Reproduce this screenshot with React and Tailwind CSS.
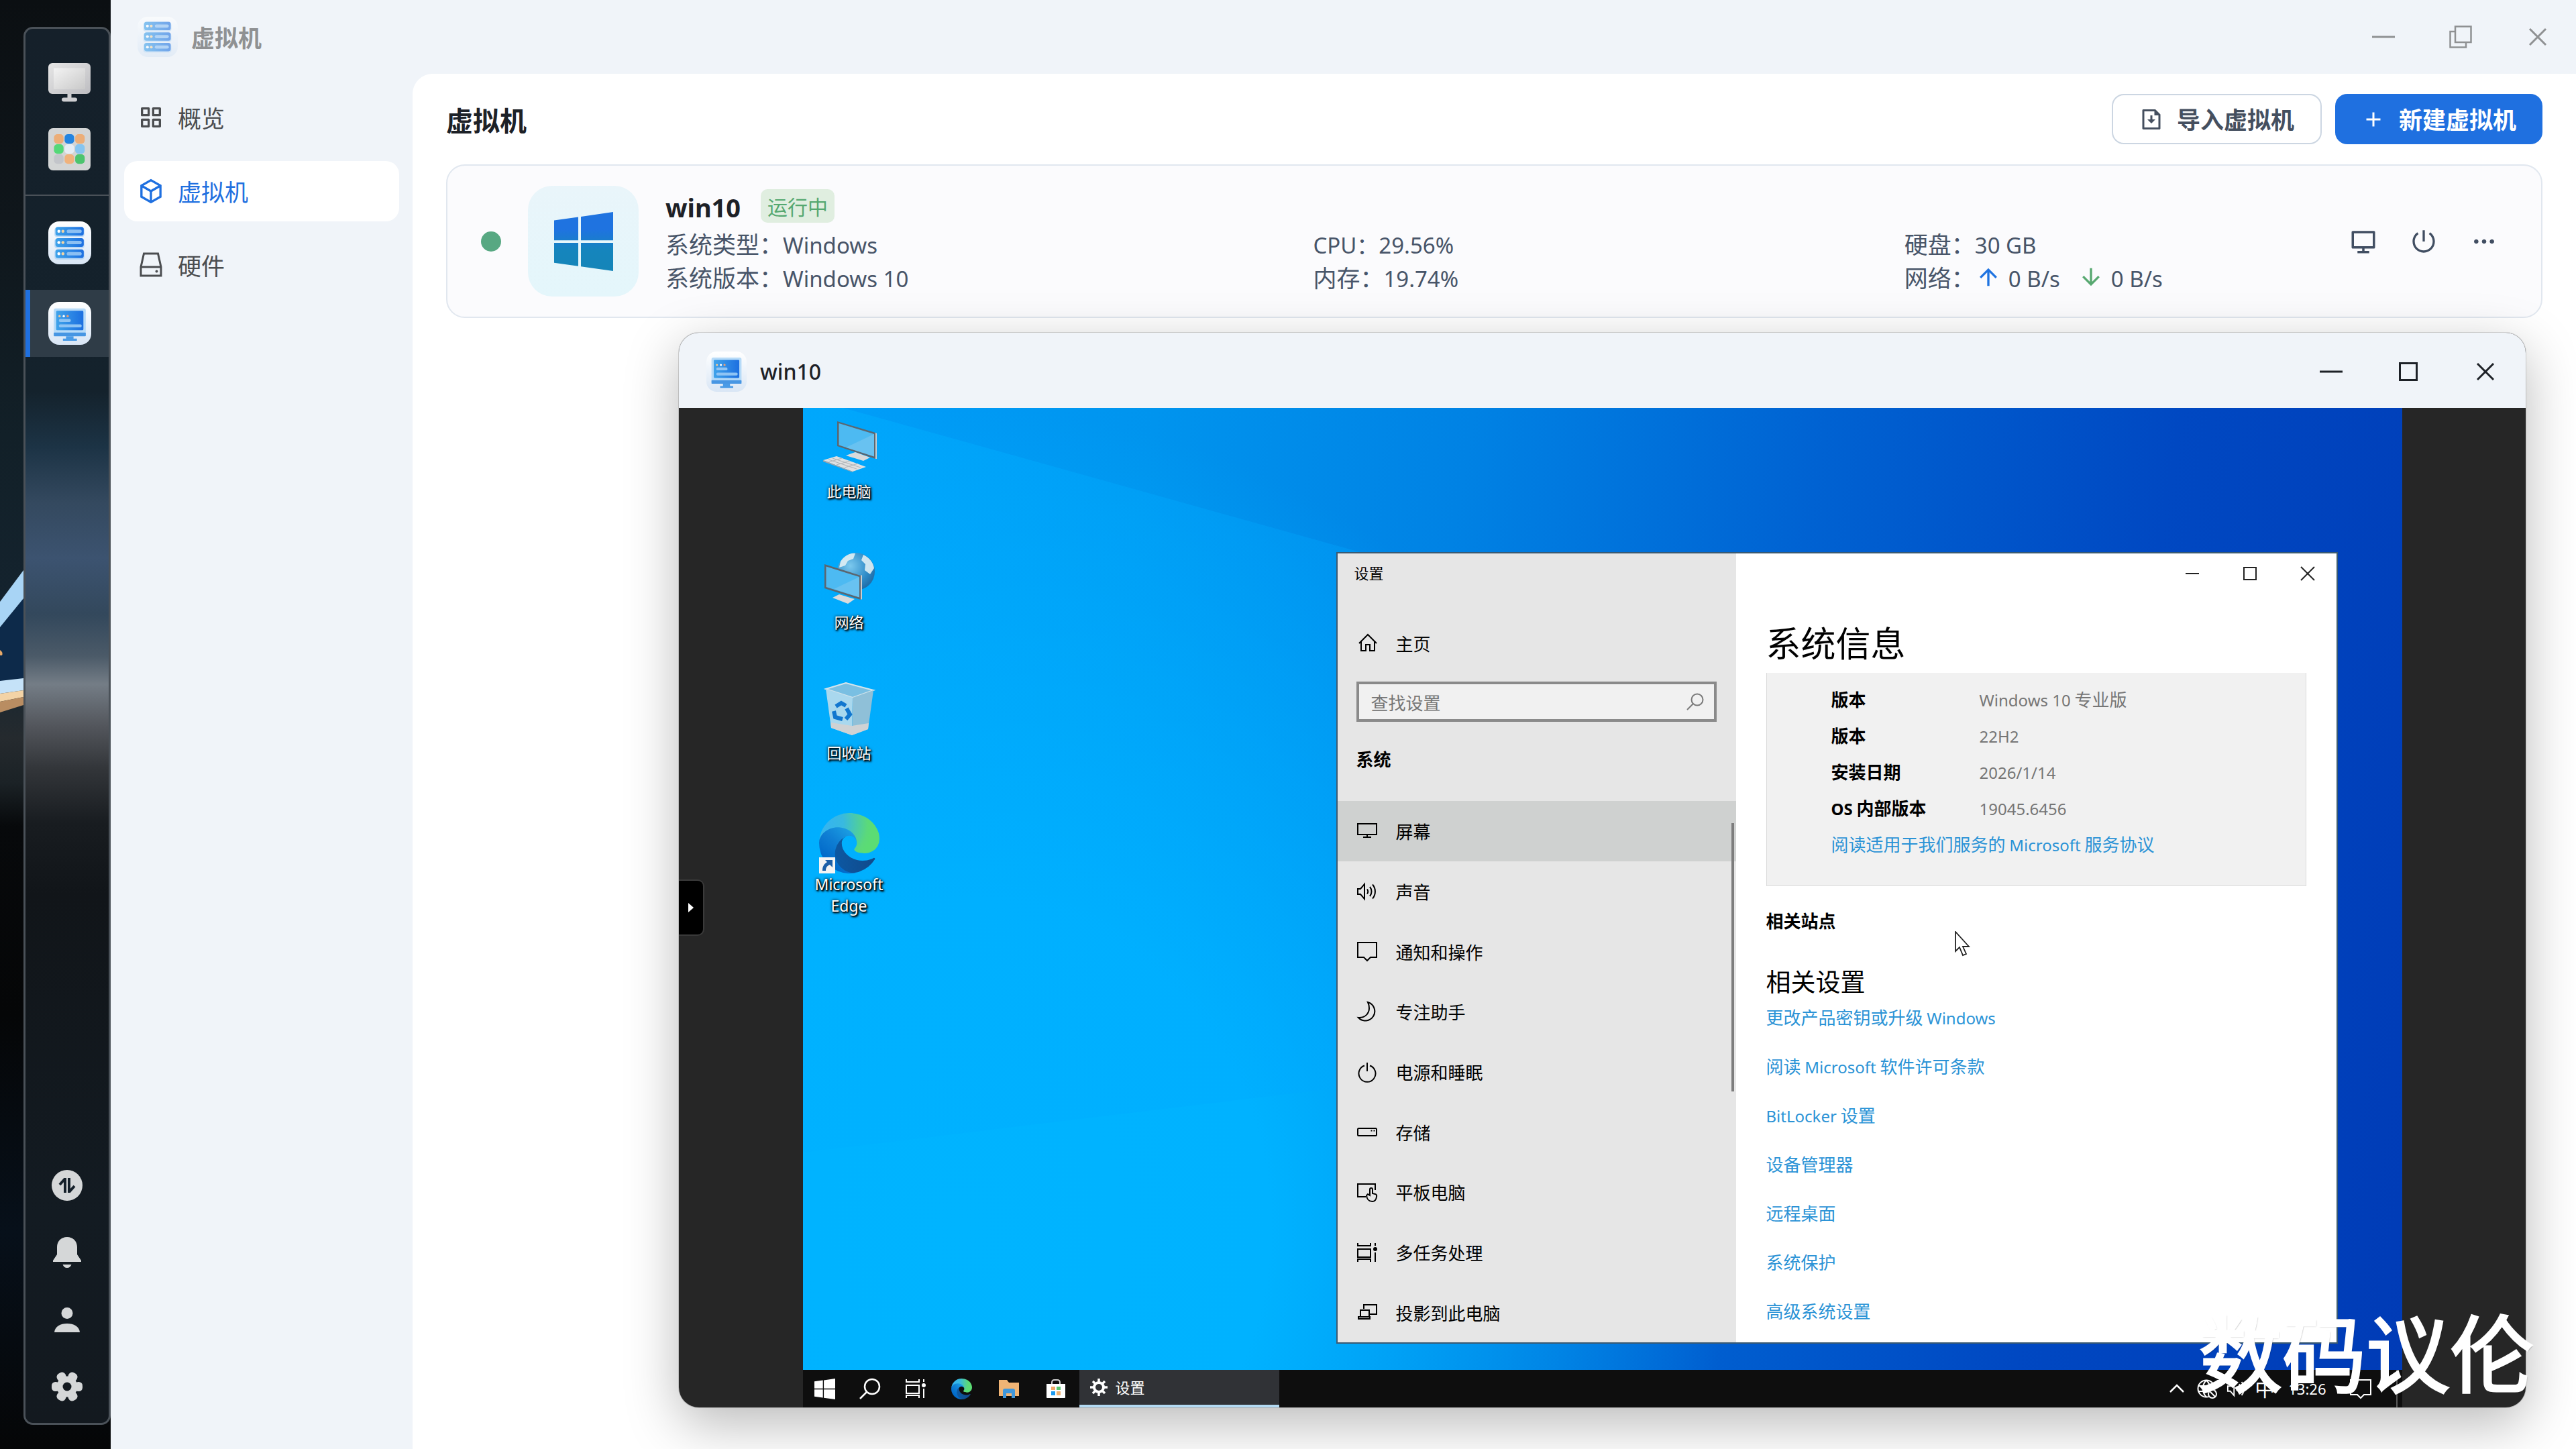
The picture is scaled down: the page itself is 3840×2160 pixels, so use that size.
import React from "react";
import {
  RiFunctionLine,
  RiBox3Line,
  RiFileDownloadLine,
  RiAddLine,
  RiComputerLine,
  RiShutDownLine,
  RiMoreFill,
  RiArrowUpLine,
  RiArrowDownLine,
} from "react-icons/ri";

/* ---------- app icons ---------- */

function ServerTile({ className }) {
  return (
    <svg viewBox="0 0 63 63" className={className} aria-hidden="true">
      <defs>
        <linearGradient id="tileBg" x1="0" y1="0" x2="0" y2="1">
          <stop offset="0" stopColor="#ffffff" />
          <stop offset="1" stopColor="#d9e6f5" />
        </linearGradient>
        <linearGradient id="blueBar" x1="0" y1="0" x2="1" y2="0">
          <stop offset="0" stopColor="#3fa3ea" />
          <stop offset="1" stopColor="#1d6fe0" />
        </linearGradient>
      </defs>
      <rect width="63" height="63" rx="16" fill="url(#tileBg)" />
      {[8, 24.5, 41].map((y) => (
        <g key={y}>
          <rect x="9" y={y + 1} width="44" height="14" rx="4" fill="#a9d0f5" opacity=".7" />
          <rect x="10.5" y={y} width="41.5" height="13" rx="3.5" fill="url(#blueBar)" />
          <circle cx="15.5" cy={y + 6.5} r="2.2" fill="#fff" />
          <circle cx="21.5" cy={y + 6.5} r="2.2" fill="#f2d5a5" />
          <rect x="27" y={y + 4} width="22" height="5" rx="2.5" fill="#8cc0f3" />
        </g>
      ))}
    </svg>
  );
}

function ScreenTile({ className }) {
  return (
    <svg viewBox="0 0 63 63" className={className} aria-hidden="true">
      <rect width="63" height="63" rx="16" fill="url(#tileBg)" />
      <rect x="8" y="9.5" width="47" height="40" rx="3" fill="#b7dbf8" />
      <rect x="11.5" y="13" width="40" height="28.5" rx="1.5" fill="url(#blueBar)" />
      <rect x="8" y="45" width="47" height="5.5" rx="1" fill="#4796e3" />
      <path d="M26 50.5h11v3.5h5v3H21.5v-3H26z" fill="#4a9be6" />
      <circle cx="16.5" cy="21" r="1.7" fill="#f0c896" />
      <circle cx="22.7" cy="21" r="1.7" fill="#fff" />
      <circle cx="28.4" cy="21" r="1.7" fill="#f0a070" />
      <rect x="15.5" y="25" width="17.5" height="4.5" rx="2" fill="#8fc4f4" />
      <rect x="15.5" y="33" width="33.5" height="4.5" rx="2" fill="#8fc4f4" />
    </svg>
  );
}

function GreyMonitor({ className }) {
  return (
    <svg viewBox="0 0 63 58" className={className} aria-hidden="true">
      <defs>
        <linearGradient id="greyMon" x1="0" y1="0" x2="1" y2="1">
          <stop offset="0" stopColor="#e6e6e6" />
          <stop offset="1" stopColor="#bdbdc1" />
        </linearGradient>
        <linearGradient id="greyScr" x1="0" y1="0" x2="1" y2="1">
          <stop offset="0" stopColor="#f3f3f3" />
          <stop offset="1" stopColor="#c9c9c9" />
        </linearGradient>
      </defs>
      <rect width="63" height="46" rx="6" fill="url(#greyMon)" />
      <rect x="8" y="7.5" width="47" height="31.5" rx="1" fill="url(#greyScr)" />
      <path d="M28.5 46h6v5.500h5.500a3 3 0 0 1 0 6h-17a3 3 0 0 1 0-6h5.500z" fill="#cfcfd2" />
    </svg>
  );
}

function AppGrid({ className }) {
  const colours = [
    "#ecae78", "#2384e0", "#ecae78",
    "#55d878", "#e6edf5", "#86c5f0",
    "#c3c5ca", "#f0b27c", "#4cc46e",
  ];
  return (
    <svg viewBox="0 0 63 63" className={className} aria-hidden="true">
      <rect width="63" height="63" rx="7" fill="#d3d5d5" />
      {colours.map((c, i) => (
        <rect
          key={i}
          x={8.5 + (i % 3) * 15.8}
          y={9 + Math.floor(i / 3) * 15}
          width="14.200"
          height="14.200"
          rx="5"
          fill={c}
        />
      ))}
    </svg>
  );
}

function WindowsLogo({ className, fill }) {
  return (
    <svg viewBox="0 0 88 88" className={className} aria-hidden="true">
      <defs>
        <linearGradient id="winBlue" x1="0" y1="0" x2="0" y2="88" gradientUnits="userSpaceOnUse">
          <stop offset="0.300" stopColor="#1f73e0" />
          <stop offset="0.650" stopColor="#1585bd" />
          <stop offset="1" stopColor="#1585b8" />
        </linearGradient>
      </defs>
      <path
        fill={fill}
        d="M0 12.400 36 7.400v34.800H0zM40 6.900 88 0v42.200H40zM0 46h36v34.700l-36-5zM40 46h48v42l-48-6.700z"
      />
    </svg>
  );
}

function EdgeLogo({ className }) {
  return (
    <svg viewBox="0 0 256 256" className={className} aria-hidden="true">
      <defs>
        <linearGradient id="edgeA" x1="63" y1="177" x2="241" y2="177" gradientUnits="userSpaceOnUse">
          <stop offset="0" stopColor="#0c59a4" />
          <stop offset="1" stopColor="#114a8b" />
        </linearGradient>
        <linearGradient id="edgeB" x1="157" y1="100" x2="46" y2="222" gradientUnits="userSpaceOnUse">
          <stop offset="0" stopColor="#1b9de2" />
          <stop offset="0.450" stopColor="#0f7fd4" />
          <stop offset="1" stopColor="#0067c8" />
        </linearGradient>
        <radialGradient id="edgeC" cx="26" cy="49" r="205" gradientUnits="userSpaceOnUse">
          <stop offset="0" stopColor="#35b4f1" />
          <stop offset="0.400" stopColor="#38b9e0" />
          <stop offset="0.900" stopColor="#5bd97a" />
          <stop offset="1" stopColor="#5bdc74" />
        </radialGradient>
      </defs>
      <g transform="translate(-4.630 -4.920)">
        <path fill="url(#edgeA)" d="M235.680 195.460a93.730 93.730 0 0 1-10.540 4.710 101.870 101.870 0 0 1-35.900 6.460c-47.320 0-88.540-32.550-88.540-74.320A31.480 31.480 0 0 1 117.130 105c-42.800 1.800-53.800 46.400-53.800 72.530 0 73.880 68.090 81.370 82.760 81.370 7.910 0 19.840-2.300 27-4.560l1.310-.44a128.340 128.340 0 0 0 66.600-52.800 4 4 0 0 0-5.320-5.640z" />
        <path fill="url(#edgeB)" d="M110.340 246.340A79.200 79.200 0 0 1 87.600 225a80.720 80.720 0 0 1 29.530-120c3.120-1.470 8.450-4.130 15.540-4a32.350 32.350 0 0 1 25.690 13 31.880 31.880 0 0 1 6.360 18.660c0-.21 24.460-79.600-80-79.600-43.900 0-80 41.660-80 78.210a130.150 130.150 0 0 0 12.110 56 128 128 0 0 0 156.380 67.110 75.550 75.550 0 0 1-62.780-8z" />
        <path fill="url(#edgeC)" d="M156.940 153.780c-.81 1.050-3.300 2.500-3.300 5.660 0 2.610 1.700 5.120 4.720 7.230 14.380 10 41.490 8.680 41.560 8.680a59.560 59.560 0 0 0 30.270-8.350 61.380 61.380 0 0 0 30.430-52.880c.26-22.410-8-37.310-11.340-43.910C228.090 28.760 182.350 5 132.610 5a128 128 0 0 0-128 126.200c.48-36.540 36.800-66.050 80-66.050 3.500 0 23.460.34 42 10.070 16.340 8.580 24.900 18.940 30.850 29.210 6.180 10.670 7.280 24.150 7.280 29.520s-2.740 13.330-7.800 19.830z" />
      </g>
    </svg>
  );
}

/* ---------- line icons ---------- */

function Line({ className, box = 30, width = 2, children }) {
  return (
    <svg
      viewBox={`0 0 ${box} ${box}`}
      className={className}
      fill="none"
      stroke="currentColor"
      strokeWidth={width}
      aria-hidden="true"
    >
      {children}
    </svg>
  );
}

const IconDrive = () => (
  <Line className="size-10" box={40} width={3}>
    <path d="M9.500 4h21l4.500 20v13H5V24zM5 24h30" transform="translate(0 -1)" />
    <circle cx="28.500" cy="29.500" r="2" fill="currentColor" stroke="none" />
  </Line>
);

const IconMin = ({ className }) => (
  <Line className={className} box={40} width={3}><path d="M3 20h34" /></Line>
);
const IconMax = ({ className }) => (
  <Line className={className} box={40} width={3}><path d="M7.500 7.500h25v25h-25z" /></Line>
);
const IconRestore = ({ className }) => (
  <Line className={className} box={40} width={2.500}>
    <path d="M12 4.500h23.500V28H12zM12 12H4.500v23.500H28V28" />
  </Line>
);
const IconClose = ({ className }) => (
  <Line className={className} box={40} width={3}><path d="m8 8 24 24M32 8 8 32" /></Line>
);

const setIcon = "size-8 shrink-0";
const S = {
  home: (
    <Line className={setIcon} box={32}>
      <path d="M3 17 16 4l13 13M6 14.500V28h7v-9h6v9h7V14.500" />
    </Line>
  ),
  display: (
    <Line className={setIcon} box={32}><path d="M2 5h28v16H2zM16 21v4M10 25h12" /></Line>
  ),
  sound: (
    <Line className={setIcon} box={32}>
      <path d="M2 12h4l6-7v22l-6-7H2zM16 12.500a6 6 0 0 1 0 7M20 9a11 11 0 0 1 0 14M24 5.500a16 16 0 0 1 0 21" />
    </Line>
  ),
  notify: (
    <Line className={setIcon} box={32}><path d="M2 3h28v22h-9l-5 5-5-5H2z" /></Line>
  ),
  moon: (
    <Line className={setIcon} box={32}>
      <path d="M17 2a14 14 0 1 1-14 23c9 1 16-6 16-14 0-3-.5-6-2-9z" />
    </Line>
  ),
  power: (
    <Line className={setIcon} box={32}>
      <path d="M12 6.500a12.500 12.500 0 1 0 8 0M16 2v13" />
    </Line>
  ),
  storage: (
    <Line className={setIcon} box={32}>
      <rect x="2" y="11" width="28" height="11" rx="1.500" />
      <path d="M21.500 14.500h2M25.500 14.500h2" />
    </Line>
  ),
  tablet: (
    <Line className={setIcon} box={32}>
      <path d="M14 23H2V4h26v9" />
      <path d="M20 20v-8a2 2 0 0 1 4 0v6l4 1c2 .5 2.500 2 2 4-.5 4-2.500 7-6.500 7-5 0-8-4-8.500-9l2-2 3 2z" />
    </Line>
  ),
  multi: (
    <Line className={setIcon} box={32}>
      <path d="M2 2v4h19V2M2 11h19v12H2zM2 30v-4h19v4M28 2v4M28 16v14" />
      <circle cx="28" cy="11" r="2" fill="currentColor" />
    </Line>
  ),
  project: (
    <Line className={setIcon} box={32}>
      <path d="M11 11V5h19v14H20M6 22v-9h13v9M3 26v-3h17v3z" />
    </Line>
  ),
  search: (
    <Line className="size-7 shrink-0" box={28}><circle cx="17" cy="11" r="8.500" /><path d="M11 17 2 26" /></Line>
  ),
};

/* Latin runs sit one step smaller than the Chinese text beside them. */
const L = ({ children }) => (
  <span className="font-['Noto_Sans','Noto_Sans_CJK_SC',sans-serif] text-[33px] leading-none">{children}</span>
);
const G = ({ children }) => (
  <span className="font-['Noto_Sans','Noto_Sans_CJK_SC',sans-serif] text-[24px] leading-none">{children}</span>
);

/* ---------- dock ---------- */

function Dock() {
  const small = "flex h-[100px] w-full items-center justify-center text-[#d5d7d8]";
  return (
    <aside className="relative flex w-[165px] shrink-0 flex-col overflow-hidden bg-[linear-gradient(180deg,#0b0f12_0%,#0f161b_15%,#122028_30%,#14232e_42%,#1c2830_48%,#252a2e_51%,#1b2226_54%,#07090b_57%,#050607_70%,#07101a_85%,#050607_100%)] pt-10 pb-9 pl-[35px]">
      <svg viewBox="0 0 35 240" className="absolute top-[840px] left-0 h-[240px] w-[35px]" aria-hidden="true">
        <path d="M0 95 35 52v123H0z" fill="#0d2a4a" />
        <path d="M0 57 35 10v42L0 95z" fill="#a8d4f5" />
        <path d="M0 137v-8q5 3 3 8z" fill="#e6a868" />
        <path d="M0 175 35 171v18L0 194z" fill="#c5e2f8" />
        <path d="M0 194 35 189v10L0 206z" fill="#f3d3a6" />
        <path d="M0 206 35 199v12L0 222z" fill="#b98d62" />
      </svg>
      <nav
        aria-label="Dock"
        className="relative flex flex-1 flex-col items-center rounded-[14px] border-[3px] border-[#4a5158] bg-[linear-gradient(180deg,#15202a_0%,#14222c_26%,#1c3345_30%,#34495f_34%,#3c5370_38%,#33485c_42%,#4b5a68_45%,#747d86_47%,#53565c_50%,#33363a_53%,#181c20_57%,#111519_62%,#131b22_85%,#13191f_100%)] pb-1"
      >
        <button aria-label="桌面" className="mt-[50px] ml-[7px] h-[60px]"><GreyMonitor className="h-[58px] w-[63px]" /></button>
        <button aria-label="应用" className="mt-[38px] mb-[36px] ml-[7px]"><AppGrid className="size-[63px]" /></button>
        <div className="h-[2px] w-full bg-[#4a5158]" />
        <button aria-label="虚拟机" className="mt-[38px] mb-[38px] ml-[7px]"><ServerTile className="size-[64px]" /></button>
        <button aria-label="win10" className="flex h-[100px] w-full items-center justify-center border-l-[7px] border-[#1f70e0] bg-[#2f3c47]">
          <ScreenTile className="size-[64px]" />
        </button>
        <div className="flex-1" />
        <button aria-label="传输" className={small}>
          <svg viewBox="0 0 46 46" className="size-[46px]" aria-hidden="true">
            <circle cx="23" cy="23" r="23" fill="currentColor" />
            <path d="M20 12v22M20 13l-8 9M26 34V12M26 33l8-9" stroke="#15202a" strokeWidth="4" fill="none" />
          </svg>
        </button>
        <button aria-label="通知" className={small}>
          <svg viewBox="0 0 44 46" className="h-[46px] w-[44px]" aria-hidden="true" fill="currentColor">
            <path d="M22 0c9 0 15 6.500 15 15v11l6 9v2H1v-2l6-9V15C7 6.500 13 0 22 0zM15.500 41h13c-1 3-3.500 5-6.500 5s-5.500-2-6.500-5z" />
          </svg>
        </button>
        <button aria-label="用户" className={small}>
          <svg viewBox="0 0 38 40" className="h-10 w-[38px]" aria-hidden="true" fill="currentColor">
            <circle cx="19" cy="10.500" r="8.500" />
            <path d="M0 39c1-9 9-13 19-13s18 4 19 13z" />
          </svg>
        </button>
        <button aria-label="设置" className={small}>
          <svg viewBox="0 0 48 48" className="size-12" aria-hidden="true" fill="currentColor">
            <mask id="cogHole">
              <rect width="48" height="48" fill="#fff" />
              <circle cx="24" cy="24" r="6.500" fill="#000" />
            </mask>
            <g mask="url(#cogHole)">
              <circle cx="24" cy="24" r="15.500" />
              {[0, 60, 120, 180, 240, 300].map((a) => (
                <rect key={a} x="35" y="17" width="12" height="14" rx="5.500" transform={`rotate(${a} 24 24)`} />
              ))}
            </g>
          </svg>
        </button>
      </nav>
    </aside>
  );
}

/* ---------- virtual machine manager ---------- */

const navItems = [
  { label: "概览", icon: <RiFunctionLine className="size-10" /> },
  { label: "虚拟机", icon: <RiBox3Line className="size-10" />, active: true },
  { label: "硬件", icon: <IconDrive /> },
];

function WindowControls({ children, className }) {
  return <div className={`flex h-full ${className}`}>{children}</div>;
}
const ctl = "flex h-full w-[115px] items-center justify-center";

function VmCard() {
  return (
    <article className="mt-[30px] flex h-[229px] items-center rounded-[28px] border-2 border-[#e1e7ef] bg-[#fbfbfd] pr-[40px] pl-[50px]">
      <span className="size-[30px] shrink-0 rounded-full bg-[#57a882]" />
      <div className="ml-10 flex size-[165px] shrink-0 items-center justify-center rounded-[36px] bg-[linear-gradient(180deg,#e9f5fa,#e4f6fb)]">
        <WindowsLogo className="size-[88px]" fill="url(#winBlue)" />
      </div>
      <div className="ml-10 grid flex-1 grid-cols-[965fr_881fr_639fr] text-[35px] leading-[50px] text-[#485569]">
        <div className="col-span-3 mb-[6px] flex h-[50px] items-center gap-[30px]">
          <h2 className="pt-1 font-['Noto_Sans',sans-serif] text-[38px] font-bold text-[#1d2127]">win10</h2>
          <span className="rounded-[10px] bg-[#e0eee0] px-[10px] text-[30px] text-[#55a870]">运行中</span>
        </div>
        <div>系统类型：<L>Windows</L></div>
        <div><L>CPU：29.56%</L></div>
        <div>硬盘：<L>30 GB</L></div>
        <div>系统版本：<L>Windows 10</L></div>
        <div>内存：<L>19.74%</L></div>
        <div className="flex items-center">
          网络：
          <RiArrowUpLine className="size-10 text-[#1f73e0]" />
          <span className="ml-[10px]"><L>0 B/s</L></span>
          <RiArrowDownLine className="ml-[26px] size-10 text-[#57a870]" />
          <span className="ml-[10px]"><L>0 B/s</L></span>
        </div>
      </div>
      <div className="flex text-[#414e62]">
        <button aria-label="控制台" className="flex size-[90px] items-center justify-center"><RiComputerLine className="size-[42px]" /></button>
        <button aria-label="电源" className="flex size-[90px] items-center justify-center"><RiShutDownLine className="size-10" /></button>
        <button aria-label="更多" className="flex size-[90px] items-center justify-center"><RiMoreFill className="size-10" /></button>
      </div>
    </article>
  );
}

function Manager() {
  return (
    <section className="flex min-w-0 flex-1 flex-col bg-[#f0f4f9]">
      <header className="flex h-[110px] shrink-0 items-center justify-between pl-[40px]">
        <div className="flex items-center gap-5">
          <ServerTile className="size-[60px] opacity-60" />
          <h1 className="text-[35px] font-bold text-[#8f9193]">虚拟机</h1>
        </div>
        <WindowControls className="text-[#8f9193]">
          <button aria-label="最小化" className={ctl}><IconMin className="size-10" /></button>
          <button aria-label="还原" className={ctl}><IconRestore className="size-10" /></button>
          <button aria-label="关闭" className={ctl}><IconClose className="size-10" /></button>
        </WindowControls>
      </header>
      <div className="flex min-h-0 flex-1">
        <nav aria-label="导航" className="flex w-[450px] shrink-0 flex-col gap-5 px-5 pt-5">
          {navItems.map((n) => (
            <a
              key={n.label}
              href="#"
              className={
                n.active
                  ? "flex h-[90px] items-center gap-5 rounded-[20px] bg-white px-5 text-[35px] text-[#1f70e0]"
                  : "flex h-[90px] items-center gap-5 rounded-[20px] px-5 text-[35px] text-[#4b4d50]"
              }
            >
              {n.icon}
              {n.label}
            </a>
          ))}
        </nav>
        <main className="min-w-0 flex-1 rounded-tl-[30px] bg-white pt-[30px] pr-[50px] pl-[50px]">
          <div className="flex h-[75px] items-center justify-between">
            <h2 className="text-[40px] font-bold text-[#1d2127]">虚拟机</h2>
            <div className="flex gap-5 text-[35px] font-bold">
              <button className="flex h-[75px] items-center gap-[20px] rounded-[18px] border-2 border-[#ccd6e2] px-[39px] text-[#454f5f]">
                <RiFileDownloadLine className="size-9" />
                导入虚拟机
              </button>
              <button className="flex h-[75px] items-center gap-[20px] rounded-[18px] bg-[#1f70e0] px-[39px] text-white">
                <RiAddLine className="size-9" />
                新建虚拟机
              </button>
            </div>
          </div>
          <VmCard />
        </main>
      </div>
    </section>
  );
}

/* ---------- guest desktop ---------- */

const PcIcon = () => (
  <svg viewBox="0 0 90 80" className="h-20 w-[90px]" aria-hidden="true">
    <path d="M27 1 84 18v39L27 38z" fill="#5b6670" />
    <path d="M84 18l2 1v38l-2 0z" fill="#c9ced2" />
    <path d="M29.500 4 82 20v33.500L29.500 36.500z" fill="#4dbaf2" />
    <path d="M82 20v33.500L40 40z" fill="#7cc8f0" opacity=".6" />
    <path d="M40 52 54 47l22 8-10 5z" fill="#d9dadb" />
    <path d="M6 59 26 53l44 16-20 7z" fill="#dfe0e1" />
    <path d="m14 58 42 14M20 56l42 14M14 62l20-6M26 66l20-6M38 70l20-6" stroke="#b4b8bb" strokeWidth="1.200" />
    <path d="M6 59v2l44 16v-1z" fill="#9fa4a8" />
  </svg>
);

const NetIcon = () => (
  <svg viewBox="0 0 90 80" className="h-20 w-[90px]" aria-hidden="true">
    <defs>
      <radialGradient id="globe" cx="0.350" cy="0.350" r="0.800">
        <stop offset="0" stopColor="#7cc9ee" />
        <stop offset="0.600" stopColor="#2f8cc8" />
        <stop offset="1" stopColor="#1b5f98" />
      </radialGradient>
    </defs>
    <circle cx="55" cy="30" r="28" fill="url(#globe)" />
    <path d="M32 15c6-9 15-13 22-12l-3 8-8 3-4 7-9 3zM66 5c9 4 15 12 16 20l-6 9-8-6 1-9-6-6z" fill="#dff0f5" opacity=".9" />
    <path d="M8 19 62 36v36L8 55z" fill="#5b6670" />
    <path d="M62 36l2-1v36l-2 1z" fill="#c9ced2" />
    <path d="M10.500 22.500 60 38v30.500L10.500 53z" fill="#4dbaf2" />
    <path d="M60 38v30.500L22 56z" fill="#7cc8f0" opacity=".6" />
    <path d="M20 69 30 64l23 7-10 7z" fill="#d9dadb" />
  </svg>
);

const BinIcon = () => (
  <svg viewBox="0 0 90 80" className="h-20 w-[90px]" aria-hidden="true">
    <path d="M10 10 40 1l41 11-31 11z" fill="#79bfe2" stroke="#d5e5ec" strokeWidth="2" />
    <path d="M10 10 50 23l-1 56-31-11z" fill="#a9d8ee" />
    <path d="M81 12 50 23l-1 56 24-9z" fill="#8fc0d8" />
    <path d="m17 60 32 5 25-4-1 9-24 9-31-11z" fill="#cfd2d4" />
    <path d="m25 36 8-5 7 4M41 39l5 9-6 7M35 55l-11-3-2-9" stroke="#1277cf" strokeWidth="6" fill="none" />
  </svg>
);

const EdgeShortcut = () => (
  <span className="relative block">
    <EdgeLogo className="size-[90px]" />
    <svg viewBox="0 0 24 24" className="absolute bottom-0 left-0 size-6" aria-hidden="true">
      <path d="M0 0h24v24H0z" fill="#f4f4f4" />
      <path d="M9 4h11v11l-4-4c-5 2-6 5-6 9H5c0-6 2-10 7-13z" fill="#1c5fa8" />
    </svg>
  </span>
);

const shortcuts = [
  { label: "此电脑", icon: <PcIcon /> },
  { label: "网络", icon: <NetIcon /> },
  { label: "回收站", icon: <BinIcon /> },
  { label: "Microsoft Edge", icon: <EdgeShortcut />, latin: true },
];

const settingsMenu = [
  ["屏幕", S.display],
  ["声音", S.sound],
  ["通知和操作", S.notify],
  ["专注助手", S.moon],
  ["电源和睡眠", S.power],
  ["存储", S.storage],
  ["平板电脑", S.tablet],
  ["多任务处理", S.multi],
  ["投影到此电脑", S.project],
];

const specs = [
  ["版本", <><G>Windows 10</G> 专业版</>],
  ["版本", <G>22H2</G>],
  ["安装日期", <G>2026/1/14</G>],
  [<><G>OS</G> 内部版本</>, <G>19045.6456</G>],
];

const related = [
  <>更改产品密钥或升级 <G>Windows</G></>,
  <>阅读 <G>Microsoft</G> 软件许可条款</>,
  <><G>BitLocker</G> 设置</>,
  "设备管理器",
  "远程桌面",
  "系统保护",
  "高级系统设置",
];

function SettingsWindow() {
  return (
    <section
      aria-label="设置"
      className="absolute top-[215px] right-[96px] bottom-[39px] left-[795px] flex border-2 border-[#3a5a72] bg-white text-[26px] text-black"
    >
      <div className="relative flex w-[594px] shrink-0 flex-col bg-[#e6e6e6]">
        <div className="pt-[12px] pl-[25px] text-[22px] leading-8">设置</div>
        <a href="#" className="mt-[69px] flex h-10 items-center gap-[26px] pl-[29px]">
          {S.home}
          主页
        </a>
        <label className="mt-[38px] mr-[29px] ml-[28px] flex h-[60px] items-center border-4 border-[#8a8a8a] bg-[#f1f1f1] pr-[14px] pl-[18px] text-[#7a7a7a]">
          <input
            type="text"
            aria-label="查找设置"
            placeholder="查找设置"
            className="min-w-0 flex-1 bg-transparent placeholder-[#767676] outline-none"
          />
          {S.search}
        </label>
        <h3 className="mt-[35px] pl-[28px] leading-10 font-bold">系统</h3>
        <nav aria-label="系统" className="mt-[43px] flex flex-1 flex-col">
          {settingsMenu.map(([label, icon], i) => (
            <a
              key={label}
              href="#"
              className={
                i === 0
                  ? "flex flex-1 items-center gap-[27px] bg-[#cfd1d0] pl-[28px]"
                  : "flex flex-1 items-center gap-[27px] pl-[28px]"
              }
            >
              {icon}
              {label}
            </a>
          ))}
        </nav>
        <div className="absolute top-[402px] right-[3px] h-[400px] w-1 bg-[#7d7d7d]" />
      </div>
      <div className="flex min-w-0 flex-1 flex-col pr-[45px] pl-[45px]">
        <div className="-mr-[45px] flex h-[60px] justify-end text-[#222]">
          <button aria-label="最小化" className="flex w-[86px] items-center justify-center"><Line className="size-6" box={24}><path d="M2 12h20" /></Line></button>
          <button aria-label="最大化" className="flex w-[86px] items-center justify-center"><Line className="size-6" box={24}><path d="M3 3h18v18H3z" /></Line></button>
          <button aria-label="关闭" className="flex w-[86px] items-center justify-center"><Line className="size-6" box={24}><path d="m2 2 20 20M22 2 2 22" /></Line></button>
        </div>
        <h2 className="mt-[36px] text-[52px] leading-[72px]">系统信息</h2>
        <div className="mt-[10px] h-[318px] border border-t-0 border-[#dadada] bg-[#f1f1f1] pt-[12px] pl-[96px] leading-[54px]">
          <table>
            <tbody>
              {specs.map(([k, v], i) => (
                <tr key={i}>
                  <th scope="row" className="w-[221px] text-left font-bold">{k}</th>
                  <td className="text-[#767676]">{v}</td>
                </tr>
              ))}
            </tbody>
          </table>
          <a href="#" className="text-[#2b93d6]">阅读适用于我们服务的 <G>Microsoft</G> 服务协议</a>
        </div>
        <h3 className="mt-[31px] leading-10 font-bold">相关站点</h3>
        <h3 className="mt-[44px] text-[37px] leading-[52px]">相关设置</h3>
        <ul className="text-[#2b93d6]">
          {related.map((r, i) => (
            <li key={i} className="h-[73px] leading-[56px]"><a href="#">{r}</a></li>
          ))}
        </ul>
      </div>
    </section>
  );
}

const taskBtn = "flex h-full w-[70px] items-center justify-center";

function Taskbar() {
  return (
    <footer className="flex h-14 shrink-0 items-center bg-[#0e0e0e] font-['Noto_Sans','Noto_Sans_CJK_SC',sans-serif] text-[22px] text-white">
      <button aria-label="开始" className="flex h-full w-[66px] items-center justify-center"><WindowsLogo className="size-[31px]" fill="#fff" /></button>
      <button aria-label="搜索" className="flex h-full w-[68px] items-center justify-center">
        <Line className="size-8" box={32} width={2.500}><circle cx="19" cy="13" r="11" /><path d="M11 21 1 31" /></Line>
      </button>
      <button aria-label="任务视图" className="flex h-full w-[68px] items-center justify-center">{S.multi}</button>
      <button aria-label="Microsoft Edge" className={taskBtn}><EdgeLogo className="size-[31px]" /></button>
      <button aria-label="文件资源管理器" className={taskBtn}>
        <svg viewBox="0 0 32 28" className="h-7 w-8" aria-hidden="true">
          <path d="M1 1h12l3 4h15v20H1z" fill="#f0b475" />
          <path d="M7 28V17q0-3 3-3h12q3 0 3 3v11h-5v-7h-8v7z" fill="#3f97dc" />
        </svg>
      </button>
      <button aria-label="Microsoft Store" className={taskBtn}>
        <svg viewBox="0 0 30 30" className="size-[30px]" aria-hidden="true">
          <path d="M9 9V6q0-4 4-4h4q4 0 4 4v3" stroke="#cfcfcf" strokeWidth="2" fill="none" />
          <path d="M1 8h28v20q0 1-1 1H2q-1 0-1-1z" fill="#fff" />
          <path d="M8 12h6v5H8z" fill="#f0a868" /><path d="M16 12h6v5h-6z" fill="#55c96f" />
          <path d="M8 19h6v6H8z" fill="#1e9bf0" /><path d="M16 19h6v6h-6z" fill="#f0b070" />
        </svg>
      </button>
      <button className="flex h-full w-[298px] items-center gap-3 border-b-4 border-[#b3daf3] bg-[#303236] px-[16px]">
        <svg viewBox="0 0 26 26" className="size-[26px]" aria-hidden="true">
          <circle cx="13" cy="13" r="7" fill="none" stroke="#fff" strokeWidth="4" />
          <path d="M13 0v5M13 21v5M0 13h5M21 13h5M4 4l3.500 3.500M18.500 18.500 22 22M22 4l-3.500 3.500M7.500 18.500 4 22" stroke="#fff" strokeWidth="3.500" />
        </svg>
        设置
      </button>
      <div className="flex-1" />
      <Line className="mr-[18px] size-6" box={24} width={2.500}><path d="m2 17 10-10 10 10" /></Line>
      <Line className="mr-[14px] size-[30px]" box={30}>
        <circle cx="14" cy="15" r="12.500" /><path d="M2 11h24M2 19h14M14 2.500c-7 7-7 18 0 25M14 2.500c4 4 5.500 8 5.500 12" />
        <circle cx="23" cy="23" r="6" fill="#0e0e0e" /><path d="m19 19 8 8" />
      </Line>
      <Line className="mr-[12px] size-[30px]" box={32}>
        <path d="M2 12h4l6-7v22l-6-7H2zM16 12.500a6 6 0 0 1 0 7M20 9a11 11 0 0 1 0 14M24 5.500a16 16 0 0 1 0 21" />
      </Line>
      <span className="mr-[20px] text-[30px] leading-8">中</span>
      <span className="mr-[35px]">13:26</span>
      <Line className="mr-[37px] size-8" box={32}><path d="M1 3h30v22h-10l-5 5-5-5H1z" /></Line>
      <span className="mr-[7px] h-full w-[2px] bg-[#5a5a5a]" />
    </footer>
  );
}

function GuestDesktop() {
  return (
    <div className="relative flex aspect-[8/5] h-full flex-col">
      <div className="relative flex-1 overflow-hidden bg-[radial-gradient(ellipse_48%_85%_at_10%_85%,#00b4ff_0%,#00b2ff_40%,transparent_100%),linear-gradient(100deg,#009ffa_0%,#0094ee_20%,#0082e4_38%,#0062d2_58%,#0048c2_78%,#003bb6_100%)]">
        <svg viewBox="0 0 2384 1434" preserveAspectRatio="none" className="absolute inset-0 size-full" aria-hidden="true">
          <defs>
            <linearGradient id="beam" x1="0" y1="0" x2="1" y2="0">
              <stop offset="0" stopColor="#00b0ff" stopOpacity="0.500" />
              <stop offset="1" stopColor="#00a8ff" stopOpacity="0.300" />
            </linearGradient>
          </defs>
          <path d="M60 0 830 215V1010L0 1110V0z" fill="url(#beam)" />
        </svg>
        <ul className="relative flex w-[138px] flex-col pt-[19px]">
          {shortcuts.map((s) => (
            <li key={s.label} className="h-[195px]">
              <button
                className={
                  s.latin
                    ? "flex w-full flex-col items-center font-['Noto_Sans',sans-serif] text-[23px] leading-8 text-white [text-shadow:1px_1px_2px_#000,2px_2px_3px_#000,0_0_4px_#000]"
                    : "flex w-full flex-col items-center gap-[8px] text-[22px] leading-8 text-white [text-shadow:1px_1px_2px_#000,2px_2px_3px_#000,0_0_4px_#000]"
                }
              >
                {s.icon}
                {s.label}
              </button>
            </li>
          ))}
        </ul>
        <SettingsWindow />
        <svg viewBox="0 0 24 38" className="absolute top-[780px] left-[1717px] h-[38px] w-6" aria-hidden="true">
          <path d="M1 1v29l6-6 5 12 5-2-5-11h9z" fill="#fff" stroke="#222" strokeWidth="1.800" />
        </svg>
      </div>
      <Taskbar />
    </div>
  );
}

function VmWindow() {
  return (
    <section
      aria-label="win10"
      className="absolute top-[496px] right-[75px] bottom-[62px] left-[1012px] flex flex-col overflow-hidden rounded-[30px] bg-[#262626] shadow-[0_0_0_1px_rgba(0,0,0,0.15),0_24px_80px_rgba(0,0,0,0.28)]"
    >
      <header className="flex h-[112px] shrink-0 items-center justify-between bg-[#f0f4f9] pt-[3px] pr-[3px] pl-[41px]">
        <div className="flex items-center gap-5">
          <ScreenTile className="size-[60px]" />
          <h2 className="font-['Noto_Sans',sans-serif] text-[32px] font-medium text-[#1d2127]">win10</h2>
        </div>
        <WindowControls className="text-[#1d2127]">
          <button aria-label="最小化" className={ctl}><IconMin className="size-10" /></button>
          <button aria-label="最大化" className={ctl}><IconMax className="size-10" /></button>
          <button aria-label="关闭" className={ctl}><IconClose className="size-10" /></button>
        </WindowControls>
      </header>
      <div className="relative flex min-h-0 flex-1 justify-center">
        <GuestDesktop />
        <button
          aria-label="展开工具栏"
          className="absolute top-[703px] left-0 flex h-[84px] w-[38px] items-center justify-center rounded-r-[10px] border-y-2 border-r-2 border-[#3a3a3a] bg-black"
        >
          <svg viewBox="0 0 8 14" className="h-[14px] w-2" aria-hidden="true"><path d="M0 0l8 7-8 7z" fill="#fff" /></svg>
        </button>
      </div>
    </section>
  );
}

export default function App() {
  return (
    <div className="relative flex h-screen w-full overflow-hidden bg-black font-['Noto_Sans_CJK_SC','Noto_Sans',sans-serif]">
      <Dock />
      <Manager />
      <VmWindow />
      <div className="pointer-events-none absolute right-[63px] bottom-[58px] text-[125px] leading-[180px] text-white [-webkit-text-stroke:3px_white] [text-shadow:1px_1px_2px_rgba(0,0,0,0.55)]">
        数码议伦
      </div>
    </div>
  );
}
